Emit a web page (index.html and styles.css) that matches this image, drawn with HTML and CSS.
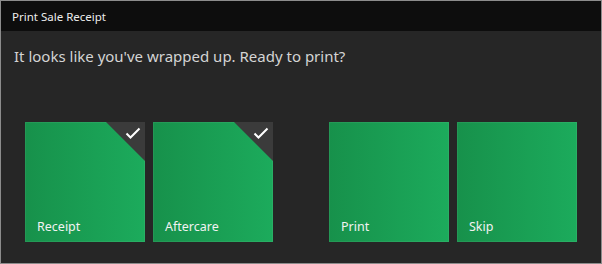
FILE: index.html
```html
<!DOCTYPE html>
<html>
<head>
  <title>Print Sale Receipt</title>
  <link rel="stylesheet" href="styles.css">
</head>
<body>
  <div class="window">
    <div class="titlebar">Print Sale Receipt</div>
    <div class="content">
      <p class="prompt">It looks like you've wrapped up. Ready to print?</p>
      <div class="tiles">
        <div class="group">
          <button class="tile checked">
            <span class="corner"></span>
            <svg class="check" viewBox="0 0 16 12" fill="none" stroke="currentColor">
              <path d="M1.5 6.5l4 4L14.5 1.5" stroke-width="2"/>
            </svg>
            <span class="label">Receipt</span>
          </button>
          <button class="tile checked">
            <span class="corner"></span>
            <svg class="check" viewBox="0 0 16 12" fill="none" stroke="currentColor">
              <path d="M1.5 6.5l4 4L14.5 1.5" stroke-width="2"/>
            </svg>
            <span class="label">Aftercare</span>
          </button>
        </div>
        <div class="group">
          <button class="tile"><span class="label">Print</span></button>
          <button class="tile"><span class="label">Skip</span></button>
        </div>
      </div>
    </div>
  </div>
</body>
</html>
```

FILE: styles.css
```css
:root {
  --ui-font: "Noto Sans", "Open Sans", sans-serif;
  --title-bg: #0d0d0d;
  --body-bg: #262626;
  --frame: #8c8c8c;
  --text: #d4d4d4;
  --tile-dark: #17914b;
  --tile-light: #1cab5c;
  --corner: #3b3b3b;
}

html, body {
  margin: 0;
  padding: 0;
  background: var(--body-bg);
}

.window {
  width: 602px;
  height: 264px;
  box-sizing: border-box;
  border: 1px solid var(--frame);
  background: var(--body-bg);
  font-family: var(--ui-font);
  display: flex;
  flex-direction: column;
}

.titlebar {
  height: 30px;
  background: var(--title-bg);
  color: #ececec;
  font-size: 11.5px;
  padding-left: 11px;
  display: flex;
  align-items: center;
}

.content {
  flex: 1;
  padding: 0 0 0 13px;
}

.prompt {
  margin: 14px 0 0 0;
  font-size: 15px;
  color: var(--text);
  line-height: 22px;
}

.tiles {
  display: flex;
  gap: 56px;
  margin-top: 55px;
  padding-left: 11px;
}

.group {
  display: flex;
  gap: 8px;
}

.tile {
  position: relative;
  width: 120px;
  height: 120px;
  border: none;
  padding: 0 0 6px 12px;
  margin: 0;
  background: linear-gradient(90deg, var(--tile-dark), var(--tile-light));
  box-shadow: inset 0 0 0 1px rgba(255,255,255,0.06);
  display: flex;
  align-items: flex-end;
  cursor: pointer;
  font-family: var(--ui-font);
  overflow: hidden;
}

.label {
  color: #f2f2f2;
  font-size: 12.5px;
  line-height: 18px;
}

.corner {
  position: absolute;
  top: 0;
  right: 0;
  width: 39px;
  height: 39px;
  background: var(--corner);
  clip-path: polygon(0 0, 100% 0, 100% 100%);
}

.check {
  position: absolute;
  top: 5px;
  right: 4px;
  width: 16px;
  height: 12px;
  color: #ffffff;
}
```
